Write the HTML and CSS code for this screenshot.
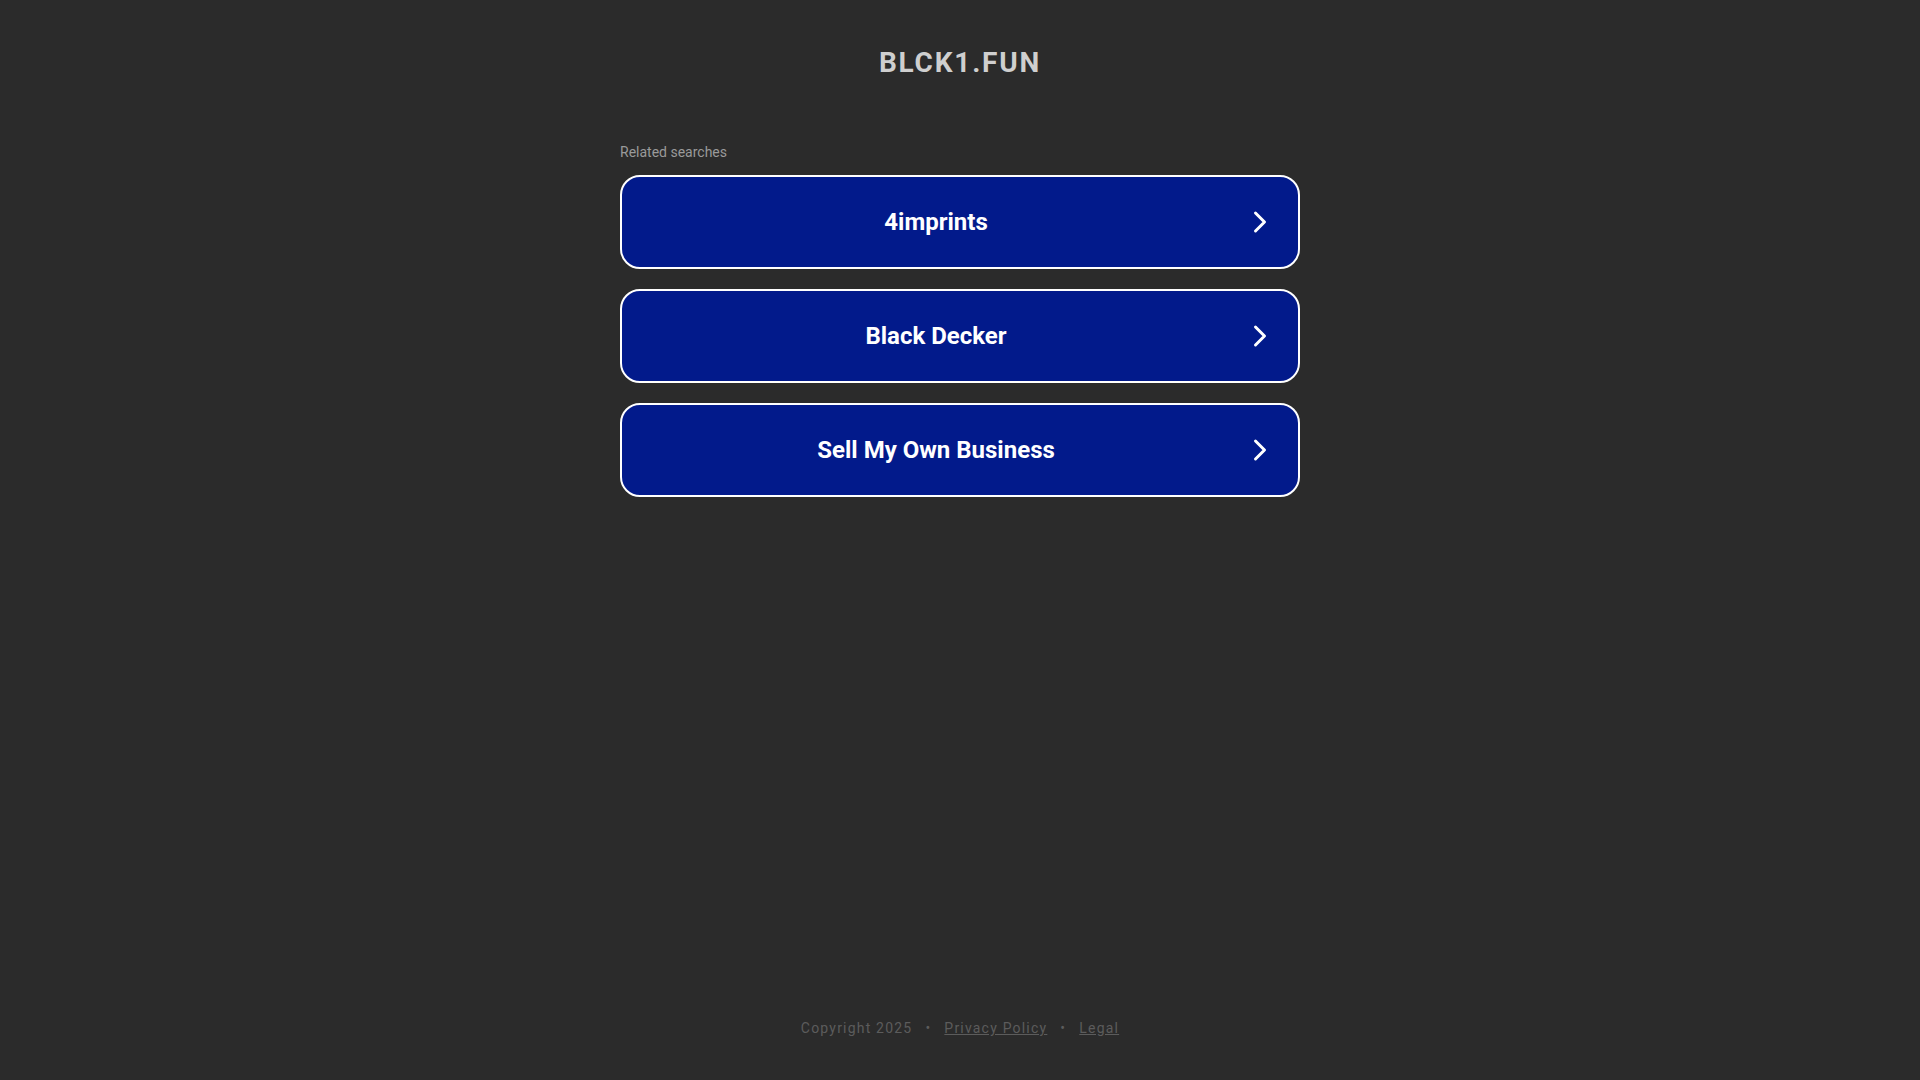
FILE: index.html
```html
<!DOCTYPE html>
<html lang="en">
<head>
<meta charset="utf-8">
<title>blck1.fun</title>
<link rel="stylesheet" href="styles.css">
</head>
<body>
<div class="page">
  <header class="header">
    <h1 class="domain">BLCK1.FUN</h1>
  </header>
  <main class="content">
    <p class="related">Related searches</p>
    <ul class="links">
      <li><a class="link" href="#"><span class="label">4imprints</span><svg class="chev" viewBox="0 0 20 24" width="20" height="24"><polyline points="5.5,3 14.5,12 5.5,21"/></svg></a></li>
      <li><a class="link" href="#"><span class="label">Black Decker</span><svg class="chev" viewBox="0 0 20 24" width="20" height="24"><polyline points="5.5,3 14.5,12 5.5,21"/></svg></a></li>
      <li><a class="link" href="#"><span class="label">Sell My Own Business</span><svg class="chev" viewBox="0 0 20 24" width="20" height="24"><polyline points="5.5,3 14.5,12 5.5,21"/></svg></a></li>
    </ul>
  </main>
  <footer class="footer">
    <span>Copyright 2025</span><span class="dot">•</span><a href="#">Privacy Policy</a><span class="dot">•</span><a href="#">Legal</a>
  </footer>
</div>
</body>
</html>
```
FILE: styles.css
```css
html, body {
  margin: 0;
  padding: 0;
  height: 100%;
}
body {
  background: #2b2b2b;
  font-family: Roboto, "Liberation Sans", sans-serif;
}
.page {
  min-height: 100%;
  display: flex;
  flex-direction: column;
}
.header {
  padding-top: 47px;
  text-align: center;
}
.domain {
  margin: 0;
  font-size: 28px;
  line-height: 32px;
  font-weight: 700;
  letter-spacing: 1.8px;
  color: #cfcfcf;
}
.content {
  width: 680px;
  margin: 65px auto 0;
  flex: 1;
}
.related {
  margin: 0 0 15px;
  font-size: 14px;
  line-height: 16px;
  color: #9a9a9a;
}
.links {
  list-style: none;
  margin: 0;
  padding: 0;
  display: flex;
  flex-direction: column;
  gap: 20px;
}
.link {
  box-sizing: border-box;
  height: 94px;
  display: flex;
  align-items: center;
  background: #021a8b;
  border: 2px solid #ffffff;
  border-radius: 20px;
  padding: 0 28px 0 0;
  text-decoration: none;
  color: #ffffff;
}
.label {
  flex: 1;
  text-align: center;
  font-size: 24px;
  font-weight: 700;
}
.chev {
  display: block;
  fill: none;
  stroke: #ffffff;
  stroke-width: 3;
  stroke-linecap: round;
  stroke-linejoin: round;
}
.footer {
  text-align: center;
  padding-bottom: 43px;
  font-size: 14px;
  line-height: 18px;
  letter-spacing: 1.2px;
  color: #5c5c5c;
}
.footer a {
  color: #5c5c5c;
  text-decoration: underline;
}
.dot {
  margin: 0 13px;
}
```
